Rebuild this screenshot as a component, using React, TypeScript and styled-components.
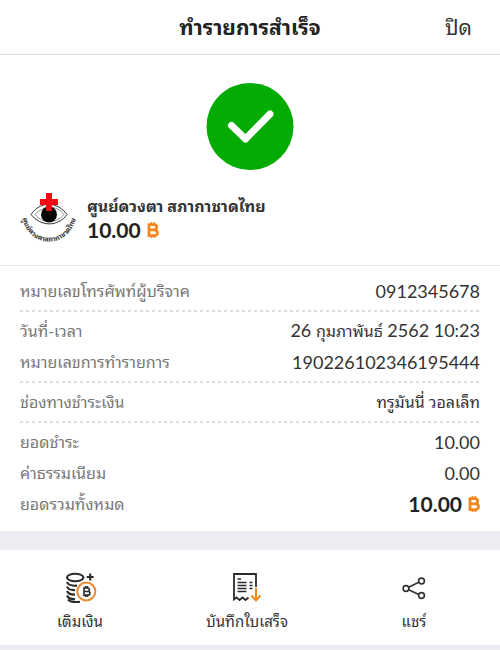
import React from "react";
import styled, { createGlobalStyle } from "styled-components";

const GlobalStyle = createGlobalStyle`
  * { box-sizing: border-box; }
  body {
    margin: 0;
    background: #eeedf3;
    color: #333;
    font-family: Lato, "Noto Sans Thai Looped", Loma, "Noto Sans Thai", "Noto Sans", sans-serif;
  }
`;

const Page = styled.main`
  width: 100%;
`;

const Header = styled.header`
  display: grid;
  grid-template-columns: 1fr auto 1fr;
  align-items: center;
  height: 55px;
  padding: 0 28px;
  background: #fff;
  border-bottom: 1px solid #dcdcdc;
`;

const Title = styled.h1`
  grid-column: 2;
  margin: 0;
  font-size: 21px;
  line-height: 32px;
  font-weight: 700;
  color: #222;
`;

const CloseButton = styled.button`
  justify-self: end;
  padding: 0;
  border: 0;
  background: none;
  font: inherit;
  font-size: 21px;
  line-height: 32px;
  color: #333;
  cursor: pointer;
`;

const Summary = styled.section`
  display: flex;
  flex-direction: column;
  padding: 28px 20px 20px;
  background: #fff;
  border-bottom: 1px solid #e8e8e8;
`;

const SuccessMark = styled.svg`
  align-self: center;
  width: 88px;
  height: 88px;
`;

const Payee = styled.div`
  display: flex;
  align-items: center;
  gap: 9px;
  margin-top: 20px;
`;

const PayeeLogo = styled.svg`
  width: 58px;
  height: 54px;
  flex: none;
`;

const PayeeName = styled.h2`
  margin: 0;
  font-size: 16px;
  line-height: 24px;
  font-weight: 700;
  color: #333;
`;

const Amount = styled.div`
  display: flex;
  align-items: center;
  gap: 6px;
  font-size: 21px;
  line-height: 24px;
  font-weight: 700;
  color: #222;
`;

const BahtIcon = styled.svg`
  width: 12px;
  height: 18px;
`;

const Details = styled.dl`
  margin: 0;
  padding: 5px 20px 8px;
  background: #fff;
`;

const Group = styled.div`
  padding: 4px 0;

  & + & {
    padding-top: 5px;
    background: linear-gradient(90deg, #dedede 3px, transparent 3px) 0 0 / 6px 2px repeat-x;
  }
`;

const Row = styled.div`
  display: flex;
  align-items: center;
  justify-content: space-between;
  height: 31px;
`;

const Label = styled.dt`
  font-size: 16px;
  line-height: 30px;
  color: #777;
`;

const Value = styled.dd<{ $text?: boolean }>`
  margin: 0;
  font-size: ${(p) => (p.$text ? 16 : 18)}px;
  line-height: 30px;
  color: #333;
`;

const ThaiWord = styled.span`
  font-size: 16px;
`;

const Actions = styled.nav`
  display: grid;
  grid-template-columns: repeat(3, 1fr);
  gap: 7px;
  margin: 19px 0 5px;
  padding: 20px 6px 11px 0;
  background: #fff;
`;

const ActionButton = styled.button`
  display: flex;
  flex-direction: column;
  align-items: center;
  gap: 3px;
  padding: 0 0 1px;
  border: 0;
  background: none;
  font: inherit;
  font-size: 15px;
  line-height: 24px;
  color: #333;
  cursor: pointer;
`;

const ActionIcon = styled.svg`
  width: 36px;
  height: 36px;
`;

const Baht = () => (
  <BahtIcon viewBox="0 0 12 18" fill="none" stroke="#f5871f" strokeWidth="2.8" role="img" aria-label="฿">
    <path d="M2 3.6h4.8c3.8 0 3.8 5.2 0 5.2H2V3.6zM2 8.8h5.2c4.4 0 4.4 5.8 0 5.8H2V8.8z" />
    <path d="M4.4 1v3M7.4 1v3M4.4 14v3M7.4 14v3" strokeWidth="1.6" />
  </BahtIcon>
);

const EyeLogo = () => (
  <PayeeLogo viewBox="0 0 58 54" role="img" aria-label="ศูนย์ดวงตา สภากาชาดไทย">
    <path d="M11 23.5C20 10 37 10 47 23.5C38 36 21 36 11 23.5Z" fill="#fff" stroke="#333" strokeWidth="1" />
    <path d="M15 23.5C24 14 37 14 44 23.5C36 33 23 33 15 23.5Z" fill="none" stroke="#777" strokeWidth="0.8" />
    <circle cx="29" cy="23.5" r="8" fill="#080808" />
    <path d="M26 2h6v6h6v6h-6v6h-6v-6h-6V8h6z" fill="#f20d14" />
    <path id="logo-arc" d="M1 20C4 61 54 61 57 20" fill="none" />
    <text fontSize="7" fontWeight="700" fill="#333">
      <textPath href="#logo-arc" startOffset="50%" textAnchor="middle">
        ศูนย์ดวงตาสภากาชาดไทย
      </textPath>
    </text>
  </PayeeLogo>
);

const TopUpIcon = () => (
  <ActionIcon viewBox="0 0 36 36" fill="none" stroke="#2b2b2b" strokeWidth="2.1" aria-hidden="true">
    <ellipse cx="13.2" cy="7.5" rx="8.2" ry="3.7" />
    <path d="M5 12c1 2.8 5 4 10 3.6M5 16.5c1 2.7 4 3.8 8 3.6M5 21c1 2.6 4 3.7 8 3.6M5 25.5c1 2.6 4 3.7 8 3.6M6 29.5c2 2.2 6 3 12 2.2M28.2 3.5v7M24.7 7h7" />
    <circle cx="24.3" cy="21.5" r="9" fill="#fff" stroke="#e98b35" />
    <path d="M22 18h3.2c3 0 3 3.5 0 3.5H22zm0 3.5h3.8c2.9 0 2.9 3.6 0 3.6H22zM23.5 16v2M25.5 16v2M23.5 25v2M25.5 25v2" strokeWidth="1.6" />
  </ActionIcon>
);

const ReceiptIcon = () => (
  <ActionIcon viewBox="0 0 36 36" fill="none" stroke="#2b2b2b" strokeWidth="1.8" aria-hidden="true">
    <path d="M27 17V4H5v25.5l2.5-2 3 2.5 3-2.5 3 2.5 3-2.5" />
    <path d="M8.5 9H12M8.5 12.5h9M8.5 15.5h9M8.5 18.5h9M8.5 21.5h9M20.5 12.5h3M20.5 15.5h3M20.5 18.5h3" strokeWidth="1.5" />
    <path d="M27 18v12M22.5 25.5l4.5 5 4.5-5" stroke="#f58b1f" strokeWidth="2" />
  </ActionIcon>
);

const ShareIcon = () => (
  <ActionIcon viewBox="0 0 36 36" fill="none" stroke="#333" strokeWidth="1.6" aria-hidden="true">
    <circle cx="10" cy="18.5" r="2.9" />
    <circle cx="25.5" cy="11" r="2.9" />
    <circle cx="25.5" cy="25.5" r="2.9" />
    <path d="M12.7 17.2l10-4.9M12.7 19.8l10 4.6" />
  </ActionIcon>
);

export default function App() {
  return (
    <Page>
      <GlobalStyle />
      <Header>
        <Title>ทำรายการสำเร็จ</Title>
        <CloseButton type="button">ปิด</CloseButton>
      </Header>
      <Summary>
        <SuccessMark viewBox="0 0 88 88" aria-hidden="true">
          <circle cx="44" cy="43.5" r="43.5" fill="#03ab03" />
          <path d="M25.5 42.5L39.5 56L64 31" fill="none" stroke="#fff" strokeWidth="7" strokeLinecap="round" strokeLinejoin="round" />
        </SuccessMark>
        <Payee>
          <EyeLogo />
          <div>
            <PayeeName>ศูนย์ดวงตา สภากาชาดไทย</PayeeName>
            <Amount>10.00 <Baht /></Amount>
          </div>
        </Payee>
      </Summary>
      <Details>
        <Group>
          <Row><Label>หมายเลขโทรศัพท์ผู้บริจาค</Label><Value>0912345678</Value></Row>
        </Group>
        <Group>
          <Row><Label>วันที่-เวลา</Label><Value>26 <ThaiWord>กุมภาพันธ์</ThaiWord> 2562 10:23</Value></Row>
          <Row><Label>หมายเลขการทำรายการ</Label><Value>190226102346195444</Value></Row>
        </Group>
        <Group>
          <Row><Label>ช่องทางชำระเงิน</Label><Value $text>ทรูมันนี่ วอลเล็ท</Value></Row>
        </Group>
        <Group>
          <Row><Label>ยอดชำระ</Label><Value>10.00</Value></Row>
          <Row><Label>ค่าธรรมเนียม</Label><Value>0.00</Value></Row>
          <Row><Label>ยอดรวมทั้งหมด</Label><Value><Amount>10.00 <Baht /></Amount></Value></Row>
        </Group>
      </Details>
      <Actions>
        <ActionButton type="button"><TopUpIcon />เติมเงิน</ActionButton>
        <ActionButton type="button"><ReceiptIcon />บันทึกใบเสร็จ</ActionButton>
        <ActionButton type="button"><ShareIcon />แชร์</ActionButton>
      </Actions>
    </Page>
  );
}
